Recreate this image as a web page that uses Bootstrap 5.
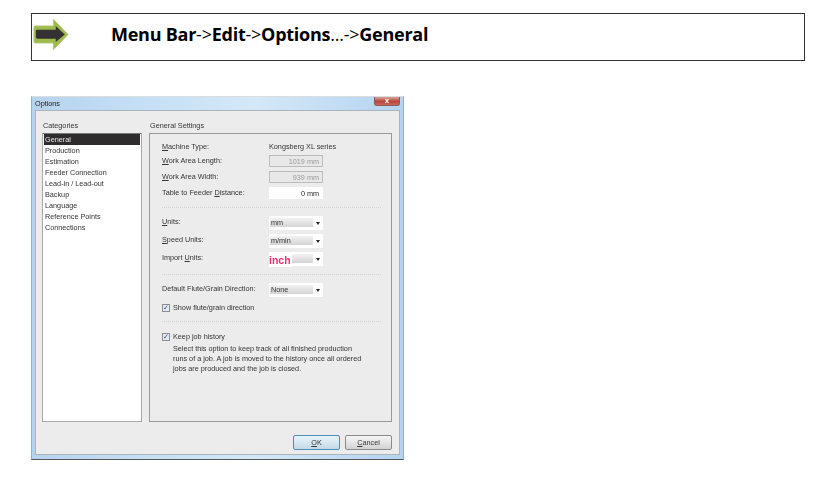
<!DOCTYPE html>
<html lang="en"><head><meta charset="utf-8"><title>Options</title>
<link href="https://cdn.jsdelivr.net/npm/bootstrap@5.3.0/dist/css/bootstrap.min.css" rel="stylesheet">
<style>
html,body{background:#fff;margin:0;overflow:hidden}
.pg{width:815px;height:477px;padding:13px 10px 0 31px}
.bnr{height:48px;width:774px;border:1px solid #333;padding-left:1px;font:400 18px/1 "Open Sans",sans-serif;color:#000;letter-spacing:-.25px}
.bnr svg{width:36px;height:33px;flex:none;margin-bottom:6px}
.bnr span{margin-left:42px;margin-bottom:6px}
.bnr b{font-weight:700}
.win{margin-top:35px;width:373px;height:364px;border:1px solid #8fb0cc;border-top-color:#ddd;border-bottom-color:#555;background:linear-gradient(90deg,#b6d3ee,#c5dff5 30%,#d4e8f8 60%,#b5d4f0);padding:13px 3px 4px 3px;font:400 7.25px/10px "Liberation Sans",sans-serif;color:#333;position:relative;filter:blur(.4px)}
.ttl{position:absolute;left:3px;top:2px;color:#222}
.cls{position:absolute;right:3px;top:0;width:26px;height:9px;background:linear-gradient(#d9a49a,#b8473a 55%,#c9685c);border:1px solid #8c5a55;border-top:0;border-radius:0 0 3px 3px;color:#fff;font:700 8px/8px "Liberation Sans",sans-serif;text-align:center}
.cli{height:345px;background:#ececec;border:1px solid #a9b4bd;padding:10px 7px 0 6px}
.cols{gap:7px}
.lcol{width:100px}
.rcol{width:243px}
.cap{height:12px;padding-left:1px;line-height:10px}
.lst{height:289px;background:#fff;border:1px solid #aaa;border-top-color:#777;padding:0 1px}
.lst div{height:11px;line-height:12px;padding-left:1px}
.lst .sel{background:#2e2c2c;color:#eee}
.grp{height:289px;border:1px solid #999;background:#ececec;padding:6px 10px 0 12px}
.rw{display:flex;align-items:center;height:16px}
.rw label{width:107px;flex:none}
.r13{height:13px}
u{text-decoration:underline}
.val{width:54px;height:12px;text-align:right;padding-right:3px;line-height:11px;border:1px solid #bbb;background:#e8e8e8;color:#999}
.val.on{background:#fff;border-color:#fff;color:#222;height:12px}
.dd{width:54px;height:14px;background:linear-gradient(#f2f2f2,#d4d4d4) no-repeat 1px 2px/43px 9px #fff;position:relative;padding-left:2px;line-height:14px}
.dd::after{content:"";position:absolute;right:3px;top:6px;border:2px solid transparent;border-top:3px solid #222;border-bottom:0}
.ink{color:#ef2f72;font:700 10.5px/14px "Liberation Sans",sans-serif;background:#fff;margin-left:-2px;padding:0 1px 0 0;display:inline-block;margin-top:1px}
.sep{border-top:1px dotted #d2d2d2}
.s1{margin:6px 0 6px}
.r19{height:18px}
.r19 label{margin-top:-3px}
.s2{margin:6px 0 6px}
.s3{margin:4px 0 7px}
.cb{width:8px;height:8px;border:1px solid #8d8d8d;background:#e4eaf3;flex:none;margin-right:3px;color:#2b4f96;font:700 7px/6px "DejaVu Sans",sans-serif;text-align:center;overflow:hidden}
.desc{padding-left:11px;margin-top:-1px;line-height:10px;white-space:nowrap}
.bts{gap:5px;margin-top:13px;justify-content:flex-end}
.wb{width:47px;height:15px;border:1px solid #8a8a8a;border-radius:2px;background:linear-gradient(#f4f4f4,#e6e6e6 50%,#d2d2d2);text-align:center;line-height:13px;padding:0;color:#333}
.wb.def{border-color:#4a8fb5;background:linear-gradient(#e6f2f9,#d8e8f2 50%,#c3d8e6)}
</style></head><body>
<div class="pg">
 <div class="bnr d-flex align-items-center">
  <svg viewBox="0 0 38 34" aria-hidden="true"><path d="M21.5 1 L37 17 L21.500 33 L21.500 26 L2.500 26 Q1 26 1 24.500 L1 9.500 Q1 8 2.500 8 L21.500 8 Z" fill="#9dba4a" stroke="#b4c97a"/><path d="M24 8 L33.500 17 L24 25 L24 21.500 L4.500 21.500 Q3 21.500 3 20 L3 13.500 Q3 12 4.500 12 L24 12 Z" fill="#353132"/></svg>
  <span><b>Menu Bar</b>-&gt;<b>Edit</b>-&gt;<b>Options</b>...-&gt;<b>General</b></span>
 </div>
 <div class="win">
  <div class="ttl">Options</div>
  <div class="cls">x</div>
  <div class="cli">
   <div class="d-flex cols">
    <div class="lcol">
     <div class="cap">Categories</div>
     <div class="lst">
      <div class="sel">General</div><div>Production</div><div>Estimation</div><div>Feeder Connection</div><div>Lead-in / Lead-out</div><div>Backup</div><div>Language</div><div>Reference Points</div><div>Connections</div>
     </div>
    </div>
    <div class="rcol">
     <div class="cap">General Settings</div>
     <div class="grp">
      <div class="rw r13"><label><u>M</u>achine Type:</label><span>Kongsberg XL series</span></div>
      <div class="rw"><label><u>W</u>ork Area Length:</label><div class="val">1019 mm</div></div>
      <div class="rw"><label><u>W</u>ork Area Width:</label><div class="val">939 mm</div></div>
      <div class="rw"><label>Table to Feeder <u>D</u>istance:</label><div class="val on">0 mm</div></div>
      <div class="sep s1"></div>
      <div class="rw r19"><label><u>U</u>nits:</label><div class="dd">mm</div></div>
      <div class="rw r19"><label><u>S</u>peed Units:</label><div class="dd">m/min</div></div>
      <div class="rw r19"><label>Import <u>U</u>nits:</label><div class="dd"><span class="ink">inch</span></div></div>
      <div class="sep s2"></div>
      <div class="rw r19"><label>Default Flute/Grain Direction:</label><div class="dd">None</div></div>
      <div class="rw r19"><span class="cb">✓</span><span>Show flute/grain direction</span></div>
      <div class="sep s3"></div>
      <div class="rw"><span class="cb">✓</span><span>Keep job history</span></div>
      <div class="desc">Select this option to keep track of all finished production<br>runs of a job. A job is moved to the history once all ordered<br>jobs are produced and the job is closed.</div>
     </div>
    </div>
   </div>
   <div class="d-flex bts">
    <button type="button" class="wb def"><u>O</u>K</button>
    <button type="button" class="wb"><u>C</u>ancel</button>
   </div>
  </div>
 </div>
</div>
</body></html>
